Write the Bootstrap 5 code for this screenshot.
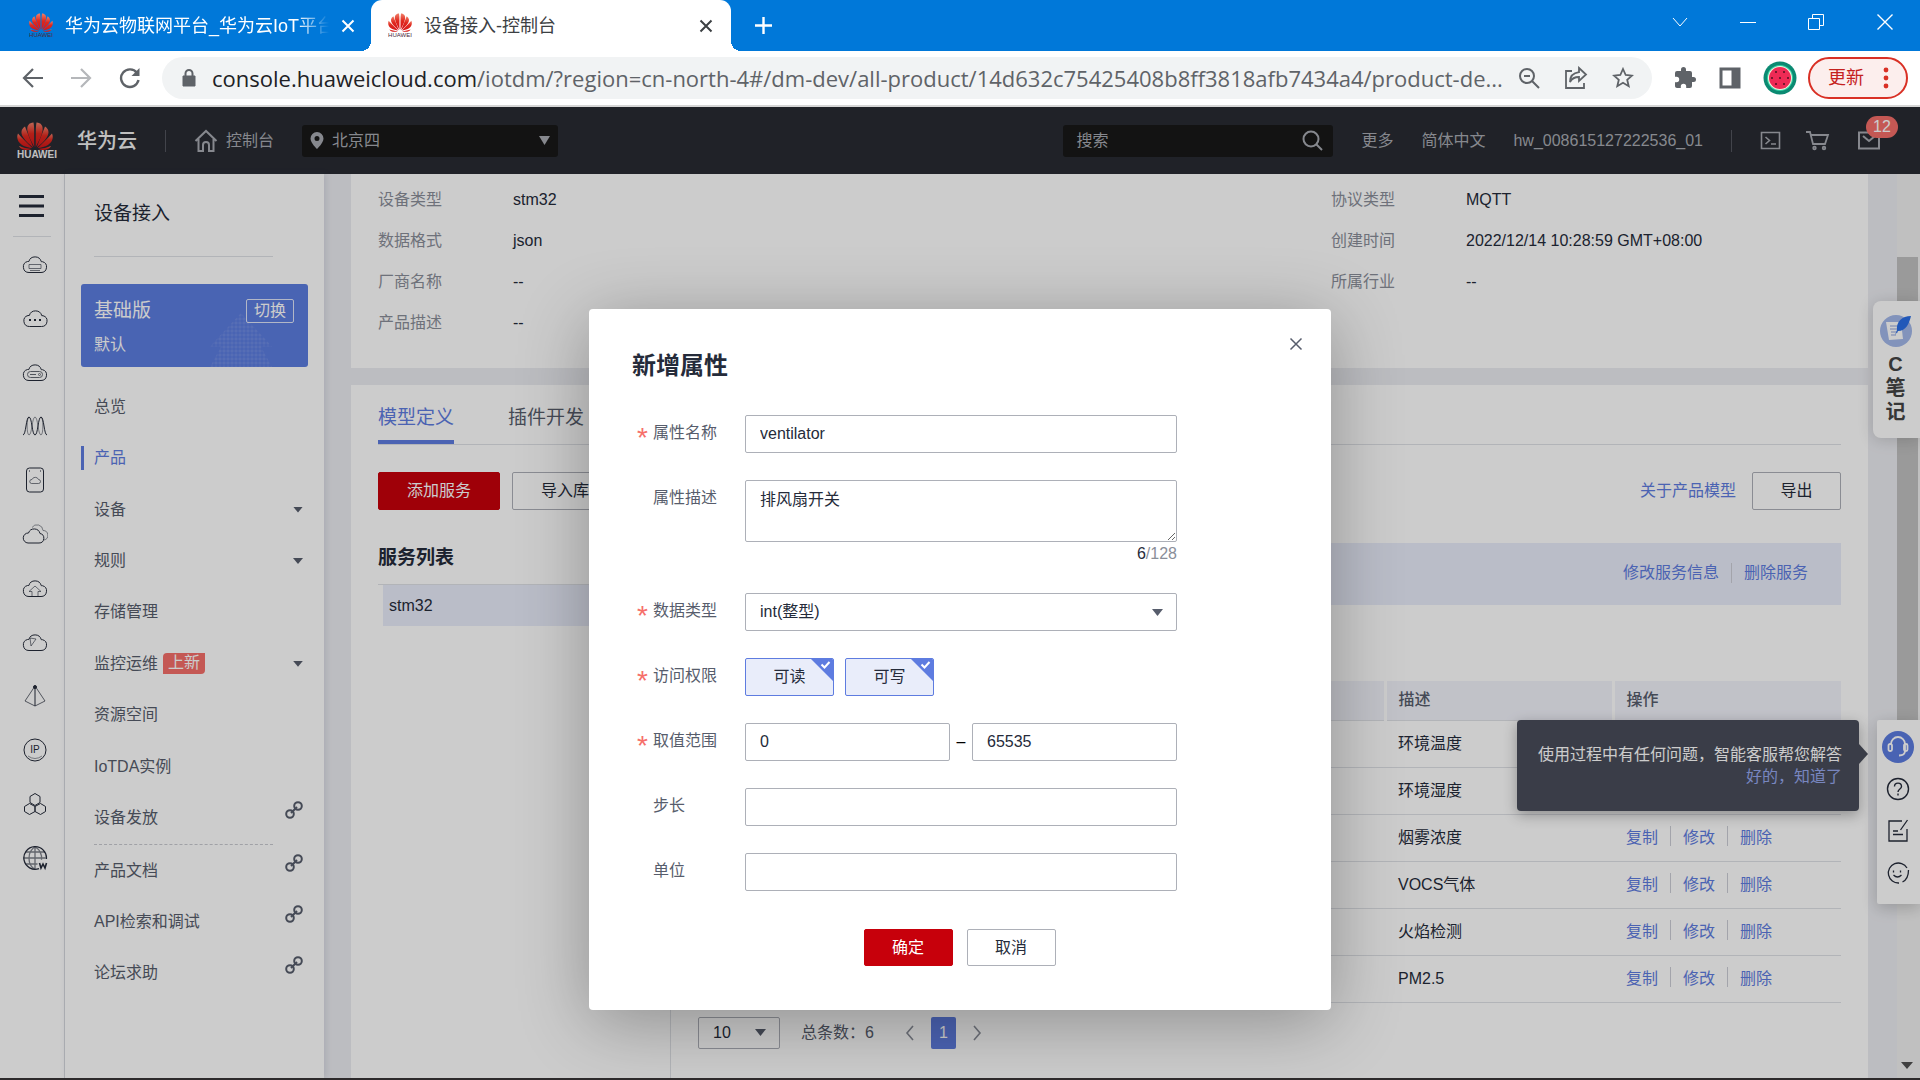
<!DOCTYPE html>
<html lang="zh-CN">
<head>
<meta charset="utf-8">
<meta name="viewport" content="width=device-width, initial-scale=1">
<title>设备接入-控制台</title>
<link href="https://cdn.jsdelivr.net/npm/bootstrap@5.3.0/dist/css/bootstrap.min.css" rel="stylesheet">
<style>
:root { --ink:#252b3a; --soft:#575d6c; --mute:#8a8e99; --brand:#5e7ce0; --line:#dfe1e6; --edge:#adb0b8; --danger:#c7000b; }
body { height:100vh; overflow:hidden; font-family:"Liberation Sans","Noto Sans CJK SC",sans-serif; font-size:16px; line-height:24px; color:var(--ink); }
a { color:var(--brand); text-decoration:none; }
button { font:inherit; color:inherit; background:none; border:0; padding:0; }
svg { display:block; flex:none; }
svg:not([fill]) { fill:none; }
svg:not([stroke]) { stroke:currentColor; }
.big { font-size:19px; line-height:28px; }
.caret { width:10px; height:6px; background:var(--soft); clip-path:polygon(0 0,100% 0,50% 100%); flex:none; }

/* browser window */
.tabstrip { height:51px; background:#0078d9; color:#fff; font-size:18px; }
.tab-one { width:371px; padding:0 14px 0 29px; gap:12px; }
.tab-one a { color:#fff; overflow:hidden; white-space:nowrap; width:264px; mask-image:linear-gradient(90deg,#000 88%,transparent); -webkit-mask-image:linear-gradient(90deg,#000 88%,transparent); }
.tab-on { width:360px; height:51px; padding:0 18px 0 17px; gap:12px; background:#fff; color:#3c4043; border-radius:11px 11px 0 0; position:relative; }
.tab-on::before,.tab-on::after { content:""; position:absolute; bottom:0; width:10px; height:10px; }
.tab-on::before { left:-10px; background:radial-gradient(circle at 0 0,transparent 10px,#fff 10px); }
.tab-on::after { right:-10px; background:radial-gradient(circle at 100% 0,transparent 10px,#fff 10px); }
.wincontrols { gap:52px; padding-right:27px; }
.addressbar { height:56px; background:#fff; border-bottom:2px solid #d6d6d6; color:#5f6368; padding:0 12px 0 22px; }
.navkeys { gap:26px; margin-right:20px; }
.omni { height:42px; border-radius:21px; background:#f1f3f4; padding:0 18px 0 20px; min-width:0; }
.omni-text { font:22px/28px "Open Sans","Noto Sans",sans-serif; color:#5f6368; white-space:nowrap; }
.omni-text b { font-weight:400; color:#202124; }
.extras { gap:20px; padding:0 11px 0 21px; }
.update { height:42px; width:100px; border:2px solid #d93025; border-radius:21px; background:#fceeed; color:#c5221f; font-size:18px; padding:0 12px 0 18px; }

/* console header */
.console { min-height:0; position:relative; background:#ecedf2; overflow:hidden; }
.taskedge { height:2px; background:#2d2a2b; flex:none; }
.topbar { height:67px; background:#282b33; color:#a8abb2; padding:0 40px 0 17px; }
.topbar a { color:inherit; }
.topbar .brandname { color:#f0f0f0; font-size:20px; font-weight:500; margin-left:20px; }
.logo-word { font-size:10px; line-height:10px; font-weight:700; color:#f0f0f0; }
.vbar { width:1px; height:22px; background:#53565e; margin:0 28px; }
.darkbox { height:32px; background:#181818; border-radius:3px; color:#a8abb2; }
.darkbox select,.darkbox input { background:none; border:0; outline:0; color:inherit; font:inherit; appearance:none; padding:0; min-width:0; }
.darkbox input::placeholder { color:#a8abb2; opacity:1; }
.darkbox .caret { background:#a8abb2; height:9px; width:11px; }
.region { width:256px; padding:0 8px; margin-left:28px; }
.finder { width:270px; padding:0 10px 0 13px; }
.msg { position:relative; }
.msg-count { position:absolute; left:8px; top:-15px; width:32px; height:22px; border-radius:11px; background:#f66f6a; color:#fff; text-align:center; line-height:22px; }

/* rails */
.rail { width:65px; background:#fff; border-right:1px solid #d9dbe1; padding:9px 0 0; flex:none; }
.rail-menu { padding-left:19px; height:46px; }
.rail-rule { width:38px; height:1px; background:var(--line); margin-left:13px; }
.rail-icons { padding-left:22px; }
.rail-icons a { height:54px; color:var(--ink); display:flex; align-items:center; }
.side { width:259px; background:#fff; padding:26px 16px 0; flex:none; box-shadow:2px 0 6px rgba(80,90,120,.15); }
.side-head { padding:0 0 28px; margin:0 35px 27px 13px; border-bottom:1px solid var(--line); }
.plan { height:83px; border-radius:3px; background:#5c7de0; color:#fff; padding:13px 14px 0 13px; position:relative; overflow:hidden; }
.plan button { width:48px; height:24px; border:1px solid #dfe5f9; border-radius:2px; line-height:22px; }
.plan-art { position:absolute; right:36px; bottom:0; width:62px; height:54px; opacity:.1; background:radial-gradient(circle,#fff 1px,transparent 2px) 0 0/4px 4px; clip-path:polygon(50% 0,100% 62%,82% 62%,100% 100%,0 100%,18% 62%,0 62%); }
.side-nav { height:618px; margin-top:14px; }
.side-nav a { color:var(--soft); padding:0 5px 0 13px; position:relative; flex:1; display:flex; align-items:center; }
.side-nav a.on { color:var(--brand); }
.side-nav a.on::before { content:""; position:absolute; left:0; width:3px; height:24px; background:var(--brand); }
.side-nav .caret { margin-left:auto; }
.side-nav a svg { margin:-16px 0 0 auto; }
.side-nav hr { margin:0 35px 0 13px; border:0; border-top:1px dashed #c8cad0; opacity:1; }
.flag { background:#f66f6a; color:#fff; border-radius:4px 0 4px 0; height:21px; line-height:20px; padding:0 5px; margin-left:5px; }

/* main content */
.work { padding:0 52px 0 27px; min-width:0; }
.panel { background:#fff; padding:0 27px; }
.facts { height:194px; padding-top:5px; margin-bottom:17px; }
.facts dl { width:953px; margin:0; display:grid; grid-template-columns:135px 1fr; grid-auto-rows:41px; line-height:41px; }
.facts dl+dl { width:auto; }
.facts dt { font-weight:400; color:var(--mute); }
.facts dd { margin:0; }
.model-tabs { height:60px; border-bottom:1px solid var(--line); gap:54px; padding-top:18px; }
.model-tabs a { color:var(--soft); height:41px; border-bottom:4px solid transparent; line-height:29px; }
.model-tabs a.on { color:var(--brand); border-color:var(--brand); }
.cbtn { height:38px; border:1px solid var(--edge); border-radius:2px; background:#fff; color:var(--ink); line-height:36px; padding:0 28px; }
.cbtn.red { background:var(--danger); border-color:var(--danger); color:#fff; }
.cbtn.mid { width:89px; padding:0; }
.toolbar-row { padding:27px 0 33px; gap:12px; }
.svc { width:293px; border-right:1px solid var(--line); flex:none; }
.svc h2 { font-size:19px; line-height:30px; height:42px; font-weight:700; margin:0; border-bottom:1px solid var(--line); }
.svc a { display:block; margin-left:5px; padding:9px 6px 8px; background:#e9edfa; color:var(--ink); }
.detail { padding-left:27px; min-width:0; }
.detail-bar { height:62px; background:#e9edfa; padding:0 33px 2px 0; margin-bottom:76px; }
.sep { width:1px; height:20px; background:#ccced6; }
.ops { gap:12px; }
.props { width:100%; table-layout:fixed; border-collapse:collapse; }
.props th { height:39px; background:#f2f3fb; font-weight:500; color:var(--soft); border-right:3px solid #fff; border-bottom:1px solid var(--line); padding:0 12px; }
.props th:last-child { border-right:0; }
.props td { height:47px; border-bottom:1px solid var(--line); padding:0 13px; }
.pager { padding-top:14px; gap:16px; color:var(--soft); }
.pager span:first-of-type { margin:0 15px 0 5px; }
.pick { appearance:none; border:1px solid var(--edge); border-radius:2px; background:#fff url("data:image/svg+xml,%3Csvg xmlns='http://www.w3.org/2000/svg' width='11' height='7'%3E%3Cpath d='M0 0h11L5.500 7z' fill='%23575d6c'/%3E%3C/svg%3E") no-repeat right 13px center; color:var(--ink); padding:0 14px; outline:0; }
.pager .pick { width:82px; height:32px; }
.pageno { width:25px; height:32px; line-height:32px; border-radius:2px; background:var(--brand); color:#fff; text-align:center; }
.scroll { position:absolute; right:0; top:67px; bottom:0; width:23px; background:#f1f1f1; }
.scroll-thumb { position:absolute; top:83px; left:0; width:21px; height:468px; background:#c1c1c1; }
.scroll-end { position:absolute; left:4px; bottom:9px; width:12px; height:7px; background:#505050; clip-path:polygon(0 0,100% 0,50% 100%); }

/* floating helpers */
.note-tab { position:absolute; right:0; top:194px; width:47px; height:137px; background:#fff; border-radius:8px 0 0 8px; box-shadow:0 2px 16px rgba(0,0,0,.16); padding:13px 2px 0 0; font-size:20px; line-height:24px; font-weight:700; color:#444; }
.help-dock { position:absolute; right:0; top:613px; width:43px; height:184px; background:#fff; border-radius:2px 0 0 2px; box-shadow:0 4px 16px rgba(0,0,0,.2); padding:11px 1px 0 0; gap:18px; color:var(--ink); }
.help-dock a { color:inherit; }
.help-face { width:32px; height:32px; border-radius:50%; background:#5c7ce0; margin-bottom:-4px; }
.tip { position:absolute; right:61px; top:613px; width:342px; height:91px; background:#494d5a; color:#fff; border-radius:4px; box-shadow:0 4px 14px rgba(0,0,0,.3); padding:24px 17px 0 0; line-height:22px; text-align:right; }
.tip::after { content:""; position:absolute; left:100%; top:24px; width:9px; height:20px; background:#494d5a; clip-path:polygon(0 0,100% 50%,0 100%); }
.tip a { color:#96a8ee; }

/* dialog */
.shade { position:absolute; inset:0; background:rgba(0,0,0,.2); padding-top:202px; }
.dialog-card { width:742px; background:#fff; border-radius:4px; box-shadow:0 12px 70px rgba(0,0,0,.3); padding:28px 28px 44px 43px; }
.dialog-card h1 { font-size:24px; line-height:30px; font-weight:700; }
.dialog-form { padding:34px 126px 0 5px; }
.frow { margin-bottom:27px; }
.flabel { width:108px; height:38px; line-height:36px; color:var(--soft); flex:none; padding-left:16px; position:relative; }
.need::before { content:"*"; position:absolute; left:0; top:5px; font-size:28px; color:#f66f6a; }
.dialog-form .form-control,.dialog-form .pick { height:38px; border:1px solid var(--edge); border-radius:2px; font-size:16px; line-height:24px; color:var(--ink); padding:0 14px; width:100%; box-shadow:none; }
.dialog-form textarea.form-control { height:62px; padding-top:7px; }
.counter { color:var(--mute); text-align:right; }
.counter b { font-weight:400; color:var(--ink); }
.perms { gap:11px; }
.perm { position:relative; width:89px; height:38px; line-height:36px; border:1px solid var(--brand); border-radius:2px; background:#e9edfa; text-align:center; overflow:hidden; }
.perm input { position:absolute; opacity:0; }
.perm svg { position:absolute; right:0; top:0; }
.dash { width:22px; text-align:center; line-height:38px; color:#000; flex:none; }
.dialog-foot { gap:14px; padding:11px 16px 0 0; }
.dialog-foot .cbtn { height:37px; }
</style>
<script src="https://cdn.jsdelivr.net/npm/bootstrap@5.3.0/dist/js/bootstrap.bundle.min.js"></script>
</head>
<body class="d-flex flex-column">
<svg width="0" height="0" class="position-absolute">
  <defs>
    <linearGradient id="petal" x1="0" y1="0" x2="0" y2="1"><stop offset="0" stop-color="#f0806a"/><stop offset=".45" stop-color="#e0281e"/><stop offset="1" stop-color="#d4151a"/></linearGradient>
    <symbol id="flower" viewBox="0 0 36 28">
      <g fill="url(#petal)" stroke="none">
        <path d="M17.3 25C17 15 17.600 6 16.500.500 12 .5 9.500 4 10.500 9c.8 5 4 11 6.800 16z"/>
        <path d="M18.700 25C19 15 18.400 6 19.500.500 24 .5 26.500 4 25.500 9c-.8 5-4 11-6.800 16z"/>
        <path d="M16.300 25.500C13.500 18 10 10 8 4.500 4 7 3.500 11 6 15c2.500 4 6.500 7.500 10.300 10.500z"/>
        <path d="M19.700 25.500C22.500 18 26 10 28 4.500c4 2.500 4.500 6.500 2 10.500-2.500 4-6.500 7.500-10.300 10.500z"/>
        <path d="M15.300 26C10 21 5 16 1 11.500-1 16 1 20.500 5 23c3 1.800 7 2.700 10.300 3z"/>
        <path d="M20.700 26C26 21 31 16 35 11.500c2 4.500 0 9-4 11.500-3 1.800-7 2.700-10.300 3z"/>
        <path d="M14.800 27C10 26.500 5.500 25.500 2 24c1.500 4 8 5 12.800 3z"/>
        <path d="M21.200 27c4.800-.5 9.300-1.500 12.800-3-1.500 4-8 5-12.800 3z"/>
      </g>
    </symbol>
    <symbol id="fav" viewBox="0 0 24 25">
      <use href="#flower" x="0" y="0" width="24" height="19"/>
      <text x="12" y="24" text-anchor="middle" font-family="Liberation Sans" font-size="6" fill="#4a2a3a" stroke="none">HUAWEI</text>
    </symbol>
    <symbol id="x" viewBox="0 0 14 14"><path d="M1.500 1.500l11 11M12.500 1.500l-11 11"/></symbol>
    <symbol id="cloud" viewBox="0 0 26 20"><path d="M7 18.500h12a5.500 5.500 0 0 0 1.500-10.800h-1.200A6.500 6.500 0 0 0 6.800 7.500H5.500A5.600 5.600 0 0 0 7 18.500z"/></symbol>
    <symbol id="chain" viewBox="0 0 18 18"><circle cx="5" cy="13" r="3.800"/><circle cx="13" cy="5" r="3.800"/><path d="M6 12l6-6"/></symbol>
  </defs>
</svg>

<header>
  <div class="tabstrip d-flex align-items-center">
    <div class="tab-one d-flex align-items-center"><svg width="24" height="25"><use href="#fav"/></svg><a href="#">华为云物联网平台_华为云IoT平台</a><button aria-label="关闭标签"><svg width="14" height="14" stroke-width="2"><use href="#x"/></svg></button></div>
    <div class="tab-on d-flex align-items-center"><svg width="24" height="25"><use href="#fav"/></svg><span class="flex-fill">设备接入-控制台</span><button aria-label="关闭标签"><svg width="14" height="14" stroke-width="2"><use href="#x"/></svg></button></div>
    <button class="ms-4" aria-label="新标签"><svg width="17" height="17" stroke-width="2.400"><path d="M8.500 0v17M0 8.500h17"/></svg></button>
    <div class="wincontrols d-flex ms-auto align-items-center pb-2">
      <button aria-label="搜索标签"><svg width="16" height="16"><path d="M1 4l7 8 7-8"/></svg></button>
      <button aria-label="最小化"><svg width="16" height="16"><path d="M0 8.500h16"/></svg></button>
      <button aria-label="还原"><svg width="17" height="16"><path d="M.5 4.500h11v11H.5zM4.500 4V.500h11v11H12"/></svg></button>
      <button aria-label="关闭"><svg width="16" height="16" stroke-width="1.400"><path d="M.5.500l15 15M15.500.500l-15 15"/></svg></button>
    </div>
  </div>
  <div class="addressbar d-flex align-items-center">
    <div class="navkeys d-flex align-items-center">
      <button aria-label="后退"><svg width="22" height="22" stroke-width="2.200"><path d="M21 11H2M11 2l-9 9 9 9"/></svg></button>
      <button aria-label="前进"><svg width="22" height="22" stroke-width="2.200" stroke="#b5b7ba"><path d="M1 11h19M11 2l9 9-9 9"/></svg></button>
      <button aria-label="重新加载"><svg width="24" height="22" stroke-width="2.400"><path d="M19 6a8.800 8.800 0 1 0 1.500 7"/><path d="M21.500 1v8h-8z" fill="currentColor" stroke="none"/></svg></button>
    </div>
    <div class="omni d-flex align-items-center flex-fill">
      <svg width="14" height="18" viewBox="0 0 14 18"><path d="M1 7h12v10H1z" fill="currentColor"/><path d="M3.500 7V4.500a3.500 3.500 0 0 1 7 0V7" stroke-width="2"/></svg>
      <span class="omni-text flex-fill ms-3"><b>console.huaweicloud.com</b>/iotdm/?region=cn-north-4#/dm-dev/all-product/14d632c75425408b8ff3818afb7434a4/product-de...</span>
      <svg width="22" height="22" stroke-width="2"><circle cx="9" cy="9" r="7"/><path d="M14 14l7 7M6 9h6"/></svg>
      <svg width="24" height="24" class="mx-4" stroke-width="1.800"><path d="M8 5H2v17h18v-5"/><path d="M15 2l7 6.500-7 6.500v-4c-5 0-7.500 2-9 5 0-5 3-9 9-9.800z"/></svg>
      <svg width="22" height="22" stroke-width="1.800"><path d="M11 2l2.700 6 6.300.6-4.800 4.200 1.500 6.400L11 15.800l-5.700 3.400 1.500-6.400L2 8.600 8.300 8z"/></svg>
    </div>
    <div class="extras d-flex align-items-center">
      <svg width="24" height="24" stroke="none" viewBox="0 0 24 24"><path fill="currentColor" d="M20.500 11H19V7a2 2 0 0 0-2-2h-4V3.500a2.500 2.500 0 0 0-5 0V5H4a2 2 0 0 0-2 2v3.800h1.500a2.700 2.700 0 0 1 0 5.400H2V20c0 1.100.9 2 2 2h3.800v-1.500a2.700 2.700 0 0 1 5.400 0V22H17a2 2 0 0 0 2-2v-4h1.500a2.500 2.500 0 0 0 0-5z"/></svg>
      <svg width="26" height="22"><path d="M4 2h18v18H4z" stroke-width="3"/><path d="M15 2h7v18h-7z" fill="currentColor"/></svg>
      <svg width="34" height="34" stroke="none"><circle cx="17" cy="17" r="16.500" fill="#0b8a72"/><circle cx="17" cy="17" r="13" fill="#35d1a4"/><circle cx="17" cy="17" r="12" fill="#f4f4e0"/><circle cx="17" cy="17" r="11" fill="#ee2a55"/><g fill="#501020"><circle cx="13" cy="11" r="1"/><circle cx="21" cy="11" r="1"/><circle cx="9" cy="17" r="1"/><circle cx="17" cy="17" r="1"/><circle cx="25" cy="17" r="1"/><circle cx="13" cy="23" r="1"/><circle cx="21" cy="23" r="1"/></g></svg>
    </div>
    <button class="update d-flex align-items-center justify-content-between">更新<svg width="16" height="22" stroke="none"><g fill="#d93025"><circle cx="8" cy="3" r="2.400"/><circle cx="8" cy="11" r="2.400"/><circle cx="8" cy="19" r="2.400"/></g></svg></button>
  </div>
</header>

<div class="console d-flex flex-column flex-fill">
  <nav class="topbar d-flex align-items-center flex-shrink-0">
    <div class="text-center"><svg width="36" height="28"><use href="#flower"/></svg><div class="logo-word">HUAWEI</div></div>
    <a href="#" class="brandname">华为云</a>
    <i class="vbar"></i>
    <a href="#" class="d-flex align-items-center gap-2"><svg width="24" height="24" stroke-width="2"><path d="M1.500 12L12 2l10.500 10M4.500 10v12H9v-6a3 3 0 0 1 6 0v6h4.500V10"/></svg>控制台</a>
    <div class="darkbox region d-flex align-items-center me-auto"><svg width="14" height="17" class="me-2" stroke="none"><path fill="#a8abb2" fill-rule="evenodd" d="M7 0a6.500 6.500 0 0 0-6.500 6.500C.5 11 7 17 7 17s6.500-6 6.500-10.500A6.500 6.500 0 0 0 7 0zm0 4a2.500 2.500 0 1 1 0 5 2.500 2.500 0 0 1 0-5z"/></svg><select class="flex-fill" aria-label="区域"><option>北京四</option></select><i class="caret"></i></div>
    <div class="darkbox finder d-flex align-items-center"><input class="flex-fill" placeholder="搜索" aria-label="搜索"><svg width="21" height="21" stroke-width="2"><circle cx="9" cy="9" r="7.500"/><path d="M14.500 14.500L20 20"/></svg></div>
    <a href="#" class="ms-4 ps-1">更多</a><a href="#" class="ms-4 ps-1">简体中文</a><a href="#" class="ms-4 ps-1">hw_008615127222536_01</a>
    <i class="vbar"></i>
    <a href="#" aria-label="终端"><svg width="22" height="20" stroke-width="1.600"><path d="M1.500 1.500h18v16h-18zM5.500 6l4 3.500-4 3.500M11 13h5"/></svg></a>
    <a href="#" class="mx-4" aria-label="购物车"><svg width="24" height="21" stroke-width="1.800"><path d="M0 2h4l3 12h12l3-9H5"/><circle cx="8.500" cy="18" r="1.300"/><circle cx="18" cy="18" r="1.300"/></svg></a>
    <a href="#" class="msg ms-1" aria-label="消息"><svg width="22" height="19" stroke-width="2"><path d="M1 1.500h20v16H1zM5 5l6 5 6-5"/></svg><span class="msg-count">12</span></a>
  </nav>

  <div class="d-flex flex-fill">
    <nav class="rail">
      <button class="rail-menu" aria-label="菜单"><svg width="25" height="24" stroke-width="3" color="#252b3a"><path d="M0 2.500h25M0 12h25M0 21.500h25"/></svg></button>
      <div class="rail-rule"></div>
      <div class="rail-icons">
        <a href="#"><svg width="26" height="20"><use href="#cloud"/><path d="M7 10.500h12v4H7zM8 16.500h10" opacity=".6"/></svg></a>
        <a href="#"><svg width="27" height="20"><use href="#cloud"/><path d="M7 12h2m3 0h2m3 0h2" stroke-width="2"/></svg></a>
        <a href="#"><svg width="26" height="20"><use href="#cloud"/><g opacity=".7"><rect x="5.500" y="9.500" width="15" height="6" rx="3"/><path d="M8 12.500h6"/><circle cx="17.500" cy="12.500" r="1"/></g></svg></a>
        <a href="#"><svg width="26" height="20"><path d="M1 19C4 19 4 1 7 1s3 18 6 18 3-18 6-18 3 18 6 18"/><path d="M7 1c-2.500 0-2.500 18 0 18 3 0 3-18 6-18s3 18 6 18c2.500 0 2.500-18 0-18" opacity=".5"/></svg></a>
        <a href="#"><svg width="26" height="26"><rect x="4.500" y="1" width="17" height="24" rx="3"/><path d="M9.500 16.500h7a2 2 0 0 0 0-4 3.500 3.500 0 0 0-6.500 0 2 2 0 0 0-.5 4z" opacity=".6"/><path d="M7 4h1m10 0h1"/></svg></a>
        <a href="#"><svg width="26" height="20"><path d="M6 19h11a4.800 4.800 0 0 0 1-9.500A6 6 0 0 0 6.500 9 5 5 0 0 0 6 19z"/><path d="M10 3.500a6 6 0 0 1 11 3 4.800 4.800 0 0 1 1 9.500" opacity=".5"/></svg></a>
        <a href="#"><svg width="26" height="20"><use href="#cloud"/><path d="M10 18.500v-5H7L13 8l6 5.500h-3v5" opacity=".6"/></svg></a>
        <a href="#"><svg width="26" height="20"><use href="#cloud"/><path d="M8 6l6 1-5 7z" opacity=".6"/></svg></a>
        <a href="#"><svg width="26" height="24"><path d="M13 2L3 17l10 5 10-5z" opacity=".7"/><path d="M13 2v20"/><circle cx="13" cy="3" r="1.500" fill="currentColor"/></svg></a>
        <a href="#"><svg width="26" height="26"><circle cx="13" cy="13" r="11"/><path d="M6 19q7 5 14 0" opacity=".5"/><text x="13" y="16" text-anchor="middle" font-size="10" font-family="Liberation Sans" fill="currentColor" stroke="none">IP</text></svg></a>
        <a href="#"><svg width="26" height="24"><path d="M13 1.500l5 3v6l-5 3-5-3v-6zM7.500 11.500l5.500 3v5l-5.500 3-5-3v-5zM18.500 11.500l5 3v5l-5 3-5.500-3v-5z"/></svg></a>
        <a href="#"><svg width="26" height="26" stroke-width="1.300"><path d="M17 23.600A11.300 11.300 0 1 1 24.400 14"/><path d="M13 1.700v22.600M1.700 13h22M3.500 7h19M3.500 19h12M13 1.700c-8 5-8 18 0 22.600M13 1.700c5 3 7 8 6.500 13" opacity=".6"/><path d="M17.500 18l1.500 5 2-4 2 4 1.500-5" stroke-width="1.600"/></svg></a>
      </div>
    </nav>

    <aside class="side">
      <div class="side-head big">设备接入</div>
      <div class="plan"><i class="plan-art"></i>
        <div class="d-flex justify-content-between align-items-center mb-2"><span class="big">基础版</span><button>切换</button></div>
        <div>默认</div>
      </div>
      <nav class="side-nav d-flex flex-column">
        <a href="#">总览</a><a href="#" class="on">产品</a><a href="#">设备<i class="caret"></i></a><a href="#">规则<i class="caret"></i></a><a href="#">存储管理</a>
        <a href="#">监控运维<span class="flag">上新</span><i class="caret"></i></a><a href="#">资源空间</a><a href="#">IoTDA实例</a>
        <a href="#">设备发放<svg width="18" height="18" stroke-width="2"><use href="#chain"/></svg></a>
        <hr>
        <a href="#">产品文档<svg width="18" height="18" stroke-width="2"><use href="#chain"/></svg></a>
        <a href="#">API检索和调试<svg width="18" height="18" stroke-width="2"><use href="#chain"/></svg></a>
        <a href="#">论坛求助<svg width="18" height="18" stroke-width="2"><use href="#chain"/></svg></a>
      </nav>
    </aside>

    <main class="work flex-fill d-flex flex-column">
      <section class="panel facts d-flex">
        <dl><dt>设备类型</dt><dd>stm32</dd><dt>数据格式</dt><dd>json</dd><dt>厂商名称</dt><dd>--</dd><dt>产品描述</dt><dd>--</dd></dl>
        <dl><dt>协议类型</dt><dd>MQTT</dd><dt>创建时间</dt><dd>2022/12/14 10:28:59 GMT+08:00</dd><dt>所属行业</dt><dd>--</dd></dl>
      </section>
      <section class="panel flex-fill d-flex flex-column">
        <nav class="model-tabs big d-flex"><a href="#" class="on">模型定义</a><a href="#">插件开发</a></nav>
        <div class="toolbar-row d-flex align-items-center">
          <button class="cbtn red">添加服务</button><button class="cbtn">导入库模型</button>
          <a href="#" class="ms-auto me-1">关于产品模型</a><button class="cbtn mid">导出</button>
        </div>
        <div class="d-flex flex-fill">
          <div class="svc"><h2>服务列表</h2><a href="#">stm32</a></div>
          <div class="detail flex-fill">
            <div class="detail-bar ops d-flex align-items-center justify-content-end"><a href="#">修改服务信息</a><i class="sep"></i><a href="#">删除服务</a></div>
            <table class="props">
              <colgroup><col><col style="width:228px"><col style="width:228px"></colgroup>
              <thead><tr><th></th><th>描述</th><th>操作</th></tr></thead>
              <tbody>
                <tr><td></td><td>环境温度</td><td></td></tr>
                <tr><td></td><td>环境湿度</td><td></td></tr>
                <tr><td></td><td>烟雾浓度</td><td><div class="ops d-flex"><a href="#">复制</a><i class="sep"></i><a href="#">修改</a><i class="sep"></i><a href="#">删除</a></div></td></tr>
                <tr><td></td><td>VOCS气体</td><td><div class="ops d-flex"><a href="#">复制</a><i class="sep"></i><a href="#">修改</a><i class="sep"></i><a href="#">删除</a></div></td></tr>
                <tr><td></td><td>火焰检测</td><td><div class="ops d-flex"><a href="#">复制</a><i class="sep"></i><a href="#">修改</a><i class="sep"></i><a href="#">删除</a></div></td></tr>
                <tr><td></td><td>PM2.5</td><td><div class="ops d-flex"><a href="#">复制</a><i class="sep"></i><a href="#">修改</a><i class="sep"></i><a href="#">删除</a></div></td></tr>
              </tbody>
            </table>
            <div class="pager d-flex align-items-center">
              <select class="pick" aria-label="每页条数"><option>10</option></select><span>总条数：6</span>
              <button aria-label="上一页"><svg width="10" height="16" stroke-width="1.600" color="#8a8e99"><path d="M8 1L2 8l6 7"/></svg></button>
              <span class="pageno">1</span>
              <button aria-label="下一页"><svg width="10" height="16" stroke-width="1.600" color="#8a8e99"><path d="M2 1l6 7-6 7"/></svg></button>
            </div>
          </div>
        </div>
      </section>
    </main>
  </div>

  <div class="scroll"><i class="scroll-thumb"></i><i class="scroll-end"></i></div>

  <div class="note-tab d-flex flex-column align-items-center">
    <svg width="32" height="34" stroke="none"><circle cx="16" cy="17" r="16" fill="#a3b8ea"/><path d="M6 8h15l2 17-14 1z" fill="#fff"/><path d="M10 12h8M10 15h8M11 18h7M11 21h5" stroke="#8fa3de" stroke-width="1.200"/><path d="M31 2c-9 0-15 6-14 14l-2 5 3-4c8 0 11-7 13-15z" fill="#2a6fe8"/></svg>
    <span class="mt-1 text-center">C<br>笔<br>记</span>
  </div>
  <div class="help-dock d-flex flex-column align-items-center">
    <a href="#" class="help-face d-flex align-items-center justify-content-center text-white" aria-label="客服"><svg width="22" height="22" stroke-width="1.800"><path d="M4 8a7 7 0 0 1 14 0v7c0 3-2 4.500-6 4.500"/><rect x="1.500" y="8" width="3.500" height="7" rx="1.500"/><rect x="17" y="8" width="3.500" height="7" rx="1.500"/></svg></a>
    <a href="#" aria-label="帮助"><svg width="24" height="24" stroke-width="1.400"><circle cx="12" cy="12" r="10.500"/><path d="M8.500 9.500c0-4.500 7-4.500 7 0 0 2.500-3.500 2.500-3.500 5.500M12 16.500v2" /></svg></a>
    <a href="#" aria-label="反馈"><svg width="22" height="24" stroke-width="1.300"><path d="M15 2H2v20h18V10M6 12h5M6 15.500h10M20.500 1l-7 10"/></svg></a>
    <a href="#" aria-label="评价"><svg width="24" height="24" stroke-width="1.300"><path d="M21 7A10 10 0 1 0 13 22M22.500 9c0 6-2 10-6 12"/><path d="M7.500 14q4 4 8 0M7.500 9.500v2m7-2v2"/></svg></a>
  </div>
  <div class="tip">使用过程中有任何问题，智能客服帮您解答<br><a href="#">好的，知道了</a></div>

  <div class="shade d-flex justify-content-center align-items-start">
    <div class="dialog-card" role="dialog" aria-labelledby="dlg-title">
      <div class="d-flex justify-content-end"><button aria-label="关闭"><svg width="14" height="14" stroke-width="1.500" color="#575d6c"><use href="#x"/></svg></button></div>
      <h1 id="dlg-title" class="m-0">新增属性</h1>
      <form class="dialog-form">
        <div class="frow d-flex"><label class="flabel need" for="f-name">属性名称</label><input id="f-name" class="form-control" value="ventilator"></div>
        <div class="frow d-flex"><label class="flabel" for="f-desc">属性描述</label><div class="flex-fill"><textarea id="f-desc" class="form-control">排风扇开关</textarea><div class="counter"><b>6</b>/128</div></div></div>
        <div class="frow d-flex"><label class="flabel need" for="f-type">数据类型</label><select id="f-type" class="pick"><option>int(整型)</option></select></div>
        <div class="frow d-flex"><span class="flabel need">访问权限</span>
          <div class="perms d-flex">
          <label class="perm"><input type="checkbox" checked>可读<svg width="22" height="22"><path d="M0 0h22v22z" fill="#5e7ce0" stroke="none"/><path d="M10.500 5.500l3 3 5-5.500" stroke="#fff" stroke-width="2"/></svg></label>
          <label class="perm"><input type="checkbox" checked>可写<svg width="22" height="22"><path d="M0 0h22v22z" fill="#5e7ce0" stroke="none"/><path d="M10.500 5.500l3 3 5-5.500" stroke="#fff" stroke-width="2"/></svg></label>
          </div>
        </div>
        <div class="frow d-flex"><label class="flabel need" for="f-min">取值范围</label><input id="f-min" class="form-control" value="0"><span class="dash">–</span><input class="form-control" value="65535" aria-label="最大值"></div>
        <div class="frow d-flex"><label class="flabel" for="f-step">步长</label><input id="f-step" class="form-control"></div>
        <div class="frow d-flex"><label class="flabel" for="f-unit">单位</label><input id="f-unit" class="form-control"></div>
      </form>
      <div class="dialog-foot d-flex justify-content-center"><button class="cbtn mid red">确定</button><button class="cbtn mid">取消</button></div>
    </div>
  </div>
</div>
<div class="taskedge"></div>
</body>
</html>
